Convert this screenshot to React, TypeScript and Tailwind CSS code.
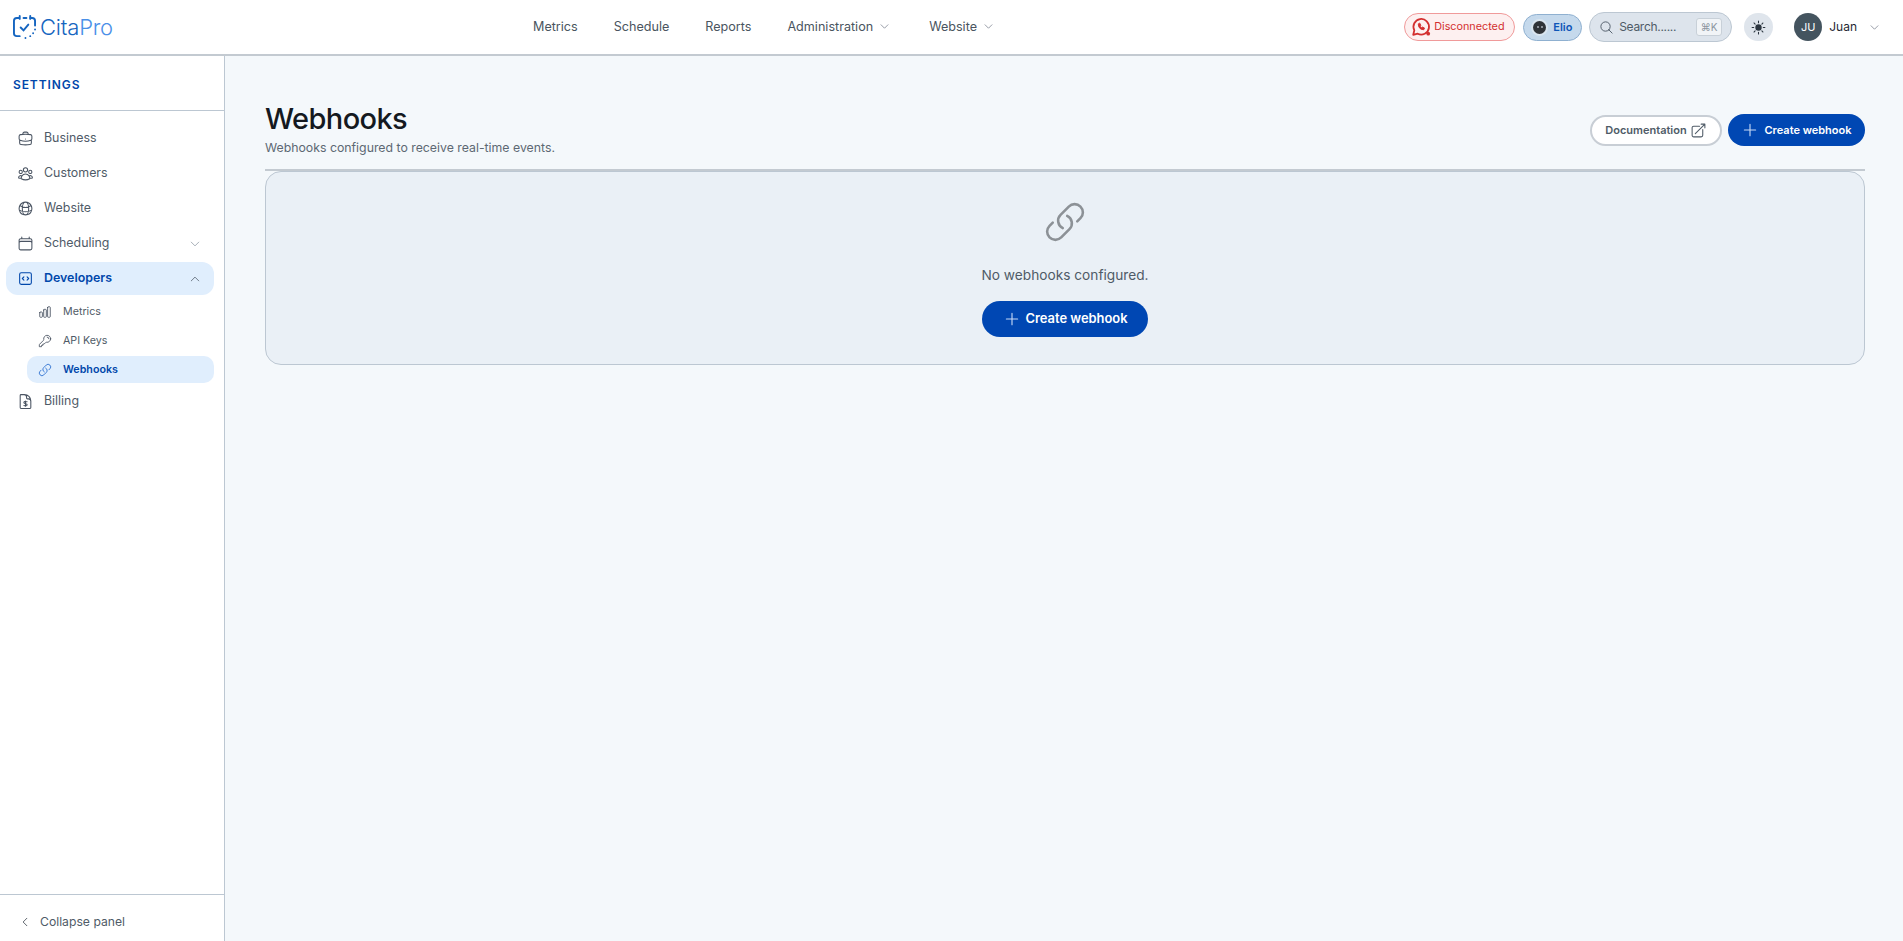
import { HiSun } from "react-icons/hi2";
import {
  HiOutlineArrowTopRightOnSquare,
  HiOutlineBriefcase,
  HiOutlineCalendar,
  HiOutlineChartBar,
  HiOutlineChevronDown,
  HiOutlineChevronLeft,
  HiOutlineChevronUp,
  HiOutlineCodeBracketSquare,
  HiOutlineDocumentCurrencyDollar,
  HiOutlineGlobeAlt,
  HiOutlineKey,
  HiOutlineLink,
  HiOutlineMagnifyingGlass,
  HiOutlinePlus,
  HiOutlineUserGroup,
} from "react-icons/hi2";

const font = "font-['Inter','Noto_Sans',sans-serif]";

const CitaLogo = () => (
  <svg width="23" height="25" viewBox="0 0 24 26" fill="none" stroke="#1565c0" strokeWidth="2" strokeLinecap="round">
    <path d="M6 3H4a3 3 0 0 0-3 3v13a3 3 0 0 0 3 3h3" />
    <path d="M11 3h3" />
    <path d="M18 3h2a3 3 0 0 1 3 3v5" />
    <path d="M7 1v3M18 1v3" />
    <path d="M8 13l3 3 5-6" />
    <path d="M23 15v.01M21 19v.01M18 22v.01M13 24v.01" strokeDasharray="1 1" />
  </svg>
);

const WhatsDisconnected = () => (
  <svg width="20" height="20" viewBox="0 0 18 18" fill="none" stroke="#d32f2f" strokeWidth="1.6" strokeLinecap="round" strokeLinejoin="round">
    <path d="M2 16l1-4a7 7 0 1 1 3 3l-4 1z" />
    <path d="M6.5 6.5c0 3 2 5 5 5l.7-1.5-1.7-1-1 .6-1.2-1.2.6-1-1-1.7z" fill="#d32f2f" strokeWidth="0.8" />
    <circle cx="15.5" cy="15" r="1.7" fill="#d32f2f" stroke="none" />
  </svg>
);

const NavLink = ({ label, caret }: { label: string; caret?: boolean }) => (
  <div className="flex items-center gap-[6px] text-[12.6px] text-[#4a5560]">
    <span>{label}</span>
    {caret && <HiOutlineChevronDown size={11} className="text-[#6b7280]" />}
  </div>
);

const SideItem = ({ icon, label, right, active }: { icon: React.ReactNode; label: string; right?: React.ReactNode; active?: boolean }) => (
  <div className={`flex h-[33px] items-center rounded-[12px] pl-[11px] pr-[13px] ${active ? "bg-[#e0eefd] font-semibold text-[#0047ab]" : "text-[#4f5b67]"}`}>
    <span className="mr-[10px] flex w-[17px] justify-center">{icon}</span>
    <span className="flex-1 text-[12.4px]">{label}</span>
    {right}
  </div>
);

const SubItem = ({ icon, label, active }: { icon: React.ReactNode; label: string; active?: boolean }) => (
  <div className={`flex h-[27px] items-center rounded-[10px] pl-[11px] ${active ? "bg-[#e0eefd] font-semibold text-[#0047ab]" : "text-[#4f5b67]"}`}>
    <span className="mr-[11px] flex w-[14px] justify-center">{icon}</span>
    <span className="pt-[2px] text-[10.7px]">{label}</span>
  </div>
);

const CreateButton = ({ className, iconSize }: { className: string; iconSize: number }) => (
  <button className={`flex items-center justify-center gap-[5px] rounded-full bg-[#0047b3] font-semibold text-white ${className}`}>
    <HiOutlinePlus size={iconSize} className="text-[#c7d9f5]" />
    Create webhook
  </button>
);

export default function App() {
  return (
    <div className={`flex h-[941px] flex-col overflow-hidden bg-[#f4f8fb] ${font}`}>
      <header className="relative z-10 flex h-[56px] shrink-0 items-center border-b-2 border-[#c3cad1] bg-white pl-[13px] pr-[23px]">
        <div className="flex w-[500px] items-center gap-[4px]">
          <CitaLogo />
          <span className="text-[22px] font-light leading-none tracking-[-0.2px] text-[#1565c0]">
            Cita<span className="text-[#4a90e8]">Pro</span>
          </span>
        </div>
        <nav className="absolute left-[533px] flex items-center gap-[36px]">
          <NavLink label="Metrics" />
          <NavLink label="Schedule" />
          <NavLink label="Reports" />
          <NavLink label="Administration" caret />
          <div className="ml-[3px]">
            <NavLink label="Website" caret />
          </div>
        </nav>
        <div className="ml-auto flex items-center">
          <div className="flex h-[28px] w-[111px] items-center gap-[3px] rounded-full border border-[#f09a9a] bg-[#fdf0f0] pl-[6px] text-[10.8px] text-[#d32f2f]">
            <WhatsDisconnected />
            Disconnected
          </div>
          <div className="ml-[8px] flex h-[27px] w-[59px] items-center gap-[7px] rounded-full border border-[#8fb0d0] bg-[#c5d9ec] pl-[9px] text-[11px] font-semibold text-[#0d56b8]">
            <span className="flex h-[13px] w-[13px] items-center justify-center gap-[2px] rounded-full bg-[#2f3338] ring-2 ring-[#d9e5f0]">
              <span className="h-[2px] w-[2px] rounded-full bg-[#aab1b8]" />
              <span className="h-[2px] w-[2px] rounded-full bg-[#aab1b8]" />
            </span>
            Elio
          </div>
          <div className="ml-[7px] flex h-[30px] w-[143px] items-center rounded-full border border-[#bcc7d2] bg-[#dde4ec] pl-[9px] pr-[9px] text-[12px] tracking-[-0.3px] text-[#4f5b67]">
            <HiOutlineMagnifyingGlass size={15} className="mr-[5px] text-[#4f5b67]" />
            Search......
            <span className="ml-auto flex h-[18px] w-[26px] items-center justify-center rounded-[3px] border border-[#c8d0d8] bg-[#f1f4f7] text-[10px] tracking-normal text-[#8b95a0]">⌘K</span>
          </div>
          <div className="ml-[12px] flex h-[28px] w-[29px] items-center justify-center rounded-full bg-[#dfe5ec]">
            <HiSun size={17} className="text-[#2c3640]" />
          </div>
          <div className="ml-[21px] flex h-[28px] w-[28px] items-center justify-center rounded-full bg-[#44545f] text-[11px] text-white">JU</div>
          <span className="ml-[7px] text-[12px] text-[#1f2933]">Juan</span>
          <HiOutlineChevronDown size={11} className="ml-[12px] text-[#6b7280]" />
        </div>
      </header>

      <div className="flex min-h-0 flex-1">
        <aside className="flex w-[225px] shrink-0 flex-col border-r border-[#bcc7d2] bg-white">
          <div className="flex h-[55px] shrink-0 items-center border-b border-[#bcc7d2] pl-[13px] pt-[3px] text-[12px] font-semibold tracking-[0.9px] text-[#0047ab]">SETTINGS</div>
          <div className="flex flex-1 flex-col pl-[6px] pr-[10px] pt-[11px]">
            <div className="flex flex-col gap-[2px]">
              <SideItem icon={<HiOutlineBriefcase size={17} className="text-[#4b5563]" />} label="Business" />
              <SideItem icon={<HiOutlineUserGroup size={17} className="text-[#4b5563]" />} label="Customers" />
              <SideItem icon={<HiOutlineGlobeAlt size={17} className="text-[#4b5563]" />} label="Website" />
              <SideItem icon={<HiOutlineCalendar size={17} className="text-[#4b5563]" />} label="Scheduling" right={<HiOutlineChevronDown size={12} className="text-[#8b95a0]" />} />
              <SideItem active icon={<HiOutlineCodeBracketSquare size={17} className="text-[#0047ab]" />} label="Developers" right={<HiOutlineChevronUp size={12} className="text-[#4b5563]" />} />
            </div>
            <div className="mt-[3px] flex flex-col gap-[2px] pl-[21px]">
              <SubItem icon={<HiOutlineChartBar size={14} className="text-[#4b5563]" />} label="Metrics" />
              <SubItem icon={<HiOutlineKey size={14} className="text-[#4b5563]" />} label="API Keys" />
              <SubItem active icon={<HiOutlineLink size={14} className="text-[#2b6fd0]" />} label="Webhooks" />
            </div>
            <div className="mt-[2px]">
              <SideItem icon={<HiOutlineDocumentCurrencyDollar size={17} className="text-[#4b5563]" />} label="Billing" />
            </div>
          </div>
          <div className="flex h-[47px] shrink-0 items-center border-t border-[#bcc7d2] pl-[19px] pt-[8px] text-[12.2px] text-[#4f5b67]">
            <HiOutlineChevronLeft size={12} className="mr-[9px] text-[#2c3640]" />
            Collapse panel
          </div>
        </aside>

        <main className="min-w-0 flex-1 pl-[40px] pr-[38px] pt-[46px]">
          <div className="flex h-[69px] items-start justify-between border-b-2 border-[#c3cad1]">
            <div className="-mt-[2px]">
              <h1 className="text-[29px] font-medium leading-[38px] tracking-[-0.6px] text-[#14191f]">Webhooks</h1>
              <p className="mt-[1px] text-[12.3px] leading-[18px] text-[#5d6873]">Webhooks configured to receive real-time events.</p>
            </div>
            <div className="mt-[12px] flex items-center gap-[6px]">
              <button className="flex h-[31px] w-[132px] items-center justify-center gap-[3px] rounded-full border-2 border-[#c8ced5] bg-white text-[11px] font-semibold text-[#4f5b67]">
                Documentation
                <HiOutlineArrowTopRightOnSquare size={17} />
              </button>
              <CreateButton className="h-[32px] w-[137px] text-[11px]" iconSize={18} />
            </div>
          </div>
          <div className="flex h-[194px] flex-col items-center rounded-[16px] border border-[#bcc7d2] bg-[#eaf0f6]">
            <HiOutlineLink size={44} strokeWidth={1.4} className="mt-[28px] text-[#8c9196]" />
            <p className="mt-[21px] text-[13.7px] text-[#4f5b67]">No webhooks configured.</p>
            <CreateButton className="mt-[15px] h-[36px] w-[166px] text-[12.9px]" iconSize={18} />
          </div>
        </main>
      </div>
    </div>
  );
}
